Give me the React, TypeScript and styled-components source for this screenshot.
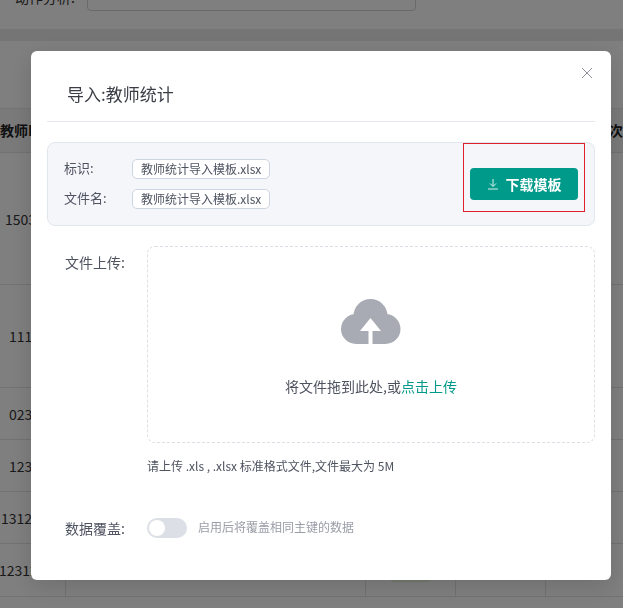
import React from "react";
import styled, { createGlobalStyle } from "styled-components";

const GlobalStyle = createGlobalStyle`
  html, body {
    margin: 0;
    padding: 0;
    background: #fff;
    overflow: hidden;
  }

  * {
    box-sizing: border-box;
  }

  body {
    font-family: "Noto Sans CJK SC", "Noto Sans", sans-serif;
  }
`;

const colors = {
  teal: "#009a8a",
  text: "#4e5360",
  line: "#e6e8ee",
};

const Page = styled.div`
  width: 623px;
  height: 608px;
  overflow: hidden;
  background: #fff;
  color: #333;
`;

const FilterBar = styled.div`
  display: flex;
  align-items: flex-end;
  height: 58px;
  margin-top: -47px;
  padding-left: 15px;
`;

const FilterLabel = styled.span`
  width: 72px;
  margin-bottom: 4px;
  font-size: 14px;
  line-height: 20px;
`;

const FilterInput = styled.div`
  width: 329px;
  height: 34px;
  padding: 5px 13px;
  border: 1px solid #d5d5d8;
  border-radius: 4px;
  font-size: 13px;
  line-height: 20px;
  color: #aaa;
`;

const Divider = styled.div`
  height: 12px;
  margin-top: 18px;
  background: #ebebeb;
`;

const TableBox = styled.div`
  margin-top: 67px;
  border-bottom: 1px solid #e4e4e4;
`;

const HeaderRow = styled.div`
  display: flex;
  justify-content: space-between;
  align-items: center;
  height: 45px;
  padding-bottom: 2px;
  background: #f5f5f5;
  border-top: 1px solid #e8e8e8;
  border-bottom: 1px solid #e4e4e4;
  font-size: 14px;
  font-weight: 700;
  color: #222;
  white-space: nowrap;
`;

const Row = styled.div<{ $height: number }>`
  display: grid;
  grid-template-columns: 66px 300px 90px 90px 1fr;
  height: ${(p) => p.$height}px;
  border-bottom: 1px solid #e4e4e4;

  &:last-child {
    border-bottom: 0;
  }
`;

const Cell = styled.div<{ $indent?: number }>`
  position: relative;
  display: flex;
  align-items: center;
  text-indent: ${(p) => p.$indent ?? 0}px;
  border-right: 1px solid #e4e4e4;
  font-size: 14px;
  white-space: nowrap;

  &:last-child {
    border-right: 0;
  }
`;

const StatusTag = styled.span`
  position: absolute;
  top: 32px;
  left: 24px;
  width: 42px;
  height: 6px;
  border-radius: 0 0 4px 4px;
  background: #e8f5e0;
`;

const Overlay = styled.div`
  position: fixed;
  inset: 0;
  background: rgba(0, 0, 0, 0.5);
`;

const Modal = styled.div`
  position: relative;
  width: 580px;
  height: 529px;
  margin: 51px 0 0 31px;
  padding: 0 16px;
  background: #fff;
  border-radius: 6px;
  box-shadow: 0 6px 24px rgba(0, 0, 0, 0.14);
`;

const CloseButton = styled.button`
  position: absolute;
  top: 16px;
  right: 18px;
  display: flex;
  padding: 0;
  border: 0;
  background: none;
  color: #8f929a;
`;

const Title = styled.h2`
  height: 71px;
  margin: 0;
  padding: 31px 0 0 20px;
  border-bottom: 1px solid ${colors.line};
  font-size: 17px;
  font-weight: 400;
  line-height: 24px;
  color: #3a3d45;
`;

const InfoBox = styled.div`
  display: flex;
  justify-content: space-between;
  align-items: flex-start;
  height: 84px;
  margin-top: 20px;
  padding-right: 9px;
  background: #f4f6fa;
  border: 1px solid #e2e6ee;
  border-radius: 8px;
`;

const InfoList = styled.div`
  display: flex;
  flex-direction: column;
  gap: 10px;
  padding: 16px 0 0 16px;
`;

const InfoRow = styled.div`
  display: flex;
  align-items: center;
  height: 20px;
`;

const InfoLabel = styled.span`
  width: 68px;
  margin-bottom: 2px;
  font-size: 13px;
  line-height: 18px;
  color: ${colors.text};
`;

const FileTag = styled.span`
  height: 20px;
  padding: 0 8px;
  background: #fff;
  border: 1px solid #cdd5e3;
  border-radius: 5px;
  font-size: 12px;
  line-height: 17px;
  color: ${colors.text};
`;

const RedBox = styled.div`
  width: 122px;
  height: 69px;
  padding: 24px 0 0 6px;
  border: 1px solid #e0202c;
`;

const DownloadButton = styled.button`
  display: flex;
  justify-content: center;
  align-items: center;
  gap: 7px;
  width: 108px;
  height: 32px;
  padding: 0;
  border: 0;
  border-radius: 4px;
  background: ${colors.teal};
  color: #fff;
  font-family: inherit;
  font-size: 14px;
  font-weight: 700;
`;

const FormRow = styled.div<{ $top: number }>`
  display: flex;
  margin-top: ${(p) => p.$top}px;
`;

const FormLabel = styled.label<{ $offset?: number }>`
  width: 100px;
  padding: ${(p) => p.$offset ?? 0}px 0 0 18px;
  font-size: 14px;
  line-height: 20px;
  color: ${colors.text};
`;

const DropZone = styled.div`
  display: flex;
  flex-direction: column;
  align-items: center;
  width: 448px;
  height: 197px;
  padding-top: 52px;
  border: 1px dashed #dcdfe6;
  border-radius: 8px;
`;

const DropText = styled.div`
  margin-top: 31px;
  font-size: 14px;
  line-height: 20px;
  color: ${colors.text};
`;

const UploadLink = styled.span`
  color: ${colors.teal};
`;

const Hint = styled.div`
  margin: 14px 0 0 100px;
  font-size: 12px;
  line-height: 18px;
  color: ${colors.text};
`;

const SwitchRow = styled.div`
  display: flex;
  align-items: center;
  gap: 11px;
`;

const Track = styled.div`
  display: flex;
  align-items: center;
  width: 40px;
  height: 20px;
  padding-left: 2px;
  border-radius: 10px;
  background: #dcdfe6;
`;

const Thumb = styled.div`
  width: 16px;
  height: 16px;
  border-radius: 50%;
  background: #fff;
`;

const SwitchHint = styled.span`
  margin-bottom: 3px;
  font-size: 12px;
  color: #9a9da6;
`;

const rows = [
  { height: 132, id: "1503", indent: 5 },
  { height: 103, id: "111", indent: 9 },
  { height: 52, id: "023", indent: 9 },
  { height: 52, id: "123", indent: 9 },
  { height: 52, id: "1312", indent: 1 },
  { height: 52, id: "12312", indent: -1 },
];

const CloseIcon = () => (
  <svg width="12" height="12" viewBox="0 0 12 12" fill="none" stroke="currentColor">
    <path d="M1 1l10 10M11 1L1 11" />
  </svg>
);

const DownloadIcon = () => (
  <svg width="12" height="12" viewBox="0 0 12 12" fill="none" stroke="currentColor" strokeOpacity="0.85">
    <path d="M6 1v7M3 5.5L6 8.5l3-3M1 11h10" />
  </svg>
);

const CloudIcon = () => (
  <svg width="60" height="46" viewBox="0 0 60 46">
    <g fill="#a8abb3">
      <circle cx="29.5" cy="17" r="17" />
      <circle cx="15" cy="30" r="15" />
      <circle cx="44.5" cy="30" r="15" />
      <rect x="15" y="22" width="29.5" height="23" />
    </g>
    <path d="M29.5 19L19 32h8.5v14h4V32H40z" fill="#fff" />
  </svg>
);

export default function App() {
  return (
    <>
      <GlobalStyle />
      <Page>
        <FilterBar>
          <FilterLabel>动作分析:</FilterLabel>
          <FilterInput>请输入</FilterInput>
        </FilterBar>
        <Divider />
        <TableBox>
          <HeaderRow>
            <span>教师ID</span>
            <span>次</span>
          </HeaderRow>
          {rows.map((row, i) => (
            <Row key={row.id} $height={row.height}>
              <Cell $indent={row.indent}>{row.id}</Cell>
              <Cell />
              <Cell>{i === rows.length - 1 && <StatusTag />}</Cell>
              <Cell />
              <Cell />
            </Row>
          ))}
        </TableBox>
        <Overlay>
          <Modal>
            <CloseButton>
              <CloseIcon />
            </CloseButton>
            <Title>导入:教师统计</Title>
            <InfoBox>
              <InfoList>
                <InfoRow>
                  <InfoLabel>标识:</InfoLabel>
                  <FileTag>教师统计导入模板.xlsx</FileTag>
                </InfoRow>
                <InfoRow>
                  <InfoLabel>文件名:</InfoLabel>
                  <FileTag>教师统计导入模板.xlsx</FileTag>
                </InfoRow>
              </InfoList>
              <RedBox>
                <DownloadButton>
                  <DownloadIcon />
                  下载模板
                </DownloadButton>
              </RedBox>
            </InfoBox>
            <FormRow $top={20}>
              <FormLabel $offset={6}>文件上传:</FormLabel>
              <DropZone>
                <CloudIcon />
                <DropText>
                  将文件拖到此处,或<UploadLink>点击上传</UploadLink>
                </DropText>
              </DropZone>
            </FormRow>
            <Hint>请上传 .xls , .xlsx 标准格式文件,文件最大为 5M</Hint>
            <FormRow $top={43}>
              <FormLabel>数据覆盖:</FormLabel>
              <SwitchRow>
                <Track>
                  <Thumb />
                </Track>
                <SwitchHint>启用后将覆盖相同主键的数据</SwitchHint>
              </SwitchRow>
            </FormRow>
          </Modal>
        </Overlay>
      </Page>
    </>
  );
}
